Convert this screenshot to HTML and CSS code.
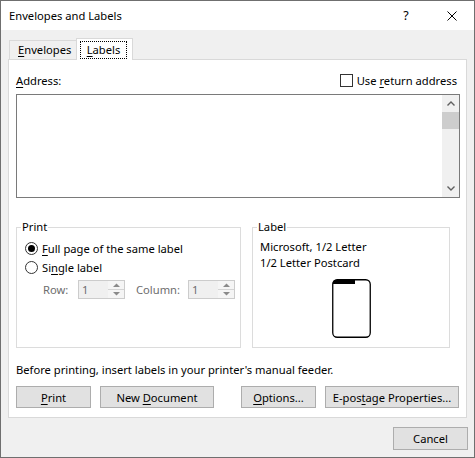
FILE: index.html
```html
<!DOCTYPE html>
<html>
<head>
<meta charset="utf-8">
<title>Envelopes and Labels</title>
<link rel="stylesheet" href="styles.css">
</head>
<body>
<div class="window">
  <div class="titlebar">
    <span class="title">Envelopes and Labels</span>
    <span class="help">?</span>
    <svg class="close" width="10" height="10" viewBox="0 0 10 10"><path d="M0.5 0.5 L9.5 9.5 M9.5 0.5 L0.5 9.5" stroke="#000" stroke-width="1" fill="none"/></svg>
  </div>
  <div class="tabs">
    <div class="tab"><u>E</u>nvelopes</div>
    <div class="tab active"><span class="focus"><u>L</u>abels</span></div>
  </div>
  <div class="panel">
    <div class="addr-row">
      <span><u>A</u>ddress:</span>
      <span class="check"><span class="box"></span><span>Use <u>r</u>eturn address</span></span>
    </div>
    <div class="textarea">
      <div class="scrollbar">
        <div class="sb-btn"><svg width="8" height="5" viewBox="0 0 8 5"><path d="M0.5 4.5 L4 1 L7.5 4.5" stroke="#606060" stroke-width="1.4" fill="none"/></svg></div>
        <div class="thumb"></div>
        <div class="track"></div>
        <div class="sb-btn"><svg width="8" height="5" viewBox="0 0 8 5"><path d="M0.5 0.5 L4 4 L7.5 0.5" stroke="#606060" stroke-width="1.4" fill="none"/></svg></div>
      </div>
    </div>
    <div class="groups">
      <fieldset class="group print">
        <legend>Print</legend>
        <div class="print-body">
          <div class="radio-row">
            <svg class="radio" width="13" height="13" viewBox="0 0 13 13"><circle cx="6.5" cy="6.5" r="6" fill="#fff" stroke="#333" stroke-width="1"/><circle cx="6.5" cy="6.5" r="3.5" fill="#000"/></svg>
            <span><u>F</u>ull page of the same label</span>
          </div>
          <div class="radio-row">
            <svg class="radio" width="13" height="13" viewBox="0 0 13 13"><circle cx="6.5" cy="6.5" r="6" fill="#fff" stroke="#333" stroke-width="1"/></svg>
            <span>Si<u>n</u>gle label</span>
          </div>
          <div class="spin-row">
            <span class="spin-label row-label">Row:</span>
            <div class="spin">
              <span class="spin-val">1</span>
              <div class="spin-btns">
                <div class="spin-btn"><svg width="7" height="4" viewBox="0 0 7 4"><path d="M0 4 L3.5 0.5 L7 4 Z" fill="#8a8a8a"/></svg></div>
                <div class="spin-btn"><svg width="7" height="4" viewBox="0 0 7 4"><path d="M0 0 L3.5 3.5 L7 0 Z" fill="#8a8a8a"/></svg></div>
              </div>
            </div>
            <span class="spin-label col-label">Column:</span>
            <div class="spin">
              <span class="spin-val">1</span>
              <div class="spin-btns">
                <div class="spin-btn"><svg width="7" height="4" viewBox="0 0 7 4"><path d="M0 4 L3.5 0.5 L7 4 Z" fill="#8a8a8a"/></svg></div>
                <div class="spin-btn"><svg width="7" height="4" viewBox="0 0 7 4"><path d="M0 0 L3.5 3.5 L7 0 Z" fill="#8a8a8a"/></svg></div>
              </div>
            </div>
          </div>
        </div>
      </fieldset>
      <fieldset class="group label">
        <legend>Label</legend>
        <div class="label-body">
          <div class="line">Microsoft, 1/2 Letter</div>
          <div class="line">1/2 Letter Postcard</div>
          <svg class="card" width="39" height="59" viewBox="0 0 39 59"><rect x="0.75" y="0.75" width="37.5" height="57.5" rx="4.5" fill="#fff" stroke="#000" stroke-width="1.3"/><path d="M0.75 5 L0.75 4.5 Q0.75 0.75 4.5 0.75 L23 0.75 L23 5 Z" fill="#000"/></svg>
        </div>
      </fieldset>
    </div>
    <p class="note">Before printing, insert labels in your printer's manual feeder.</p>
    <div class="buttons">
      <button class="btn b-print"><u>P</u>rint</button>
      <button class="btn b-new">New <u>D</u>ocument</button>
      <button class="btn b-opt"><u>O</u>ptions...</button>
      <button class="btn b-epost">E-pos<u>t</u>age Properties...</button>
    </div>
  </div>
  <div class="footer">
    <button class="btn b-cancel">Cancel</button>
  </div>
</div>
</body>
</html>
```
FILE: styles.css
```css
* { box-sizing: border-box; }
html, body { margin: 0; padding: 0; }
body {
  font-family: "Noto Sans", "Segoe UI", sans-serif;
  font-size: 11.2px;
  color: #000;
  background: #fff;
}
u { text-decoration: underline; text-underline-offset: 2px; }

.window {
  width: 475px;
  height: 458px;
  border: 1px solid #6f6f6f;
  background: #f0f0f0;
  display: flex;
  flex-direction: column;
}

.titlebar {
  height: 29px;
  flex: none;
  background: #fff;
  display: flex;
  align-items: center;
  padding: 0 17px 0 8px;
}
.title { flex: 1; }
.help { width: 12px; text-align: center; margin-right: 35px; font-size: 12.5px; }
.close { display: block; }

.tabs {
  display: flex;
  align-items: flex-end;
  height: 22px;
  margin: 8px 0 -1px 8px;
  position: relative;
  z-index: 1;
}
.tab {
  height: 20px;
  width: 67px;
  border: 1px solid #d9d9d9;
  border-bottom: none;
  border-right: none;
  padding-left: 8px;
  line-height: 18px;
}
.tab.active {
  height: 22px;
  width: 57px;
  background: #fff;
  border-right: 1px solid #d9d9d9;
  padding: 2px 0 0 3px;
}
.focus {
  display: inline-block;
  width: 47px;
  height: 18px;
  border: 1px dotted #000;
  text-align: center;
  line-height: 15px;
}

.panel {
  margin: 0 7px;
  height: 359px;
  flex: none;
  background: #fff;
  border: 1px solid #d9d9d9;
  padding: 13px 6px 0 7px;
  display: flex;
  flex-direction: column;
}

.addr-row {
  height: 14px;
  display: flex;
  justify-content: space-between;
  align-items: center;
  padding-right: 3px;
}
.check { display: flex; align-items: center; }
.box {
  width: 13px;
  height: 13px;
  border: 1px solid #333;
  background: #fff;
  margin-right: 4px;
}

.textarea {
  margin-top: 7px;
  height: 104px;
  border: 1px solid #7a7a7a;
  display: flex;
  justify-content: flex-end;
}
.scrollbar {
  width: 17px;
  background: #f0f0f0;
  display: flex;
  flex-direction: column;
}
.sb-btn {
  height: 17px;
  display: flex;
  align-items: center;
  justify-content: center;
}
.sb-btn svg { display: block; }
.thumb { height: 17px; background: #cdcdcd; }
.track { flex: 1; }

.groups {
  margin-top: 22px;
  display: flex;
  gap: 11px;
}
fieldset.group {
  margin: 0;
  padding: 0;
  border: 1px solid #dcdcdc;
  min-width: 0;
  height: 128px;
}
legend {
  padding: 0 1px;
  margin-left: 4px;
  line-height: 14px;
}
.group.print { width: 225px; }
.group.label { width: 198px; }

.print-body { padding: 5px 0 0 8px; }
.radio-row {
  height: 19px;
  display: flex;
  align-items: center;
}
.radio { display: block; margin-right: 4px; flex: none; }
.spin-row {
  margin-top: 3px;
  padding-left: 18px;
  display: flex;
  align-items: center;
  height: 19px;
  color: #6d6d6d;
}
.row-label { width: 35px; }
.col-label { width: 52px; margin-left: 11px; }
.spin {
  width: 47px;
  height: 19px;
  border: 1px solid #cccccc;
  background: #f0f0f0;
  display: flex;
}
.spin-val { flex: 1; padding-left: 3px; line-height: 17px; }
.spin-btns {
  width: 16px;
  display: flex;
  flex-direction: column;
  background: #f5f5f5;
}
.spin-btn {
  flex: 1;
  display: flex;
  align-items: center;
  justify-content: center;
}
.spin-btn + .spin-btn { border-top: 1px solid #d4d4d4; }
.spin-btn svg { display: block; }

.label-body {
  padding: 5px 0 0 7px;
  display: flex;
  flex-direction: column;
}
.line { line-height: 16px; }
.card { display: block; margin: 8px auto 0; position: relative; left: -3px; }

.note {
  margin: 14px 0 0;
  line-height: 16px;
}

.buttons {
  margin-top: 8px;
  display: flex;
}
.btn {
  height: 22px;
  padding: 0;
  border: 1px solid #adadad;
  background: #e1e1e1;
  font-family: inherit;
  font-size: 11.2px;
  color: #000;
}
.b-print { width: 75px; }
.b-new { width: 114px; margin-left: 9px; }
.b-opt { width: 75px; margin-left: 27px; }
.b-epost { width: 134px; margin-left: 9px; }

.footer {
  display: flex;
  justify-content: flex-end;
  padding: 9px 6px 0 0;
}
.b-cancel { width: 75px; height: 23px; }
```
